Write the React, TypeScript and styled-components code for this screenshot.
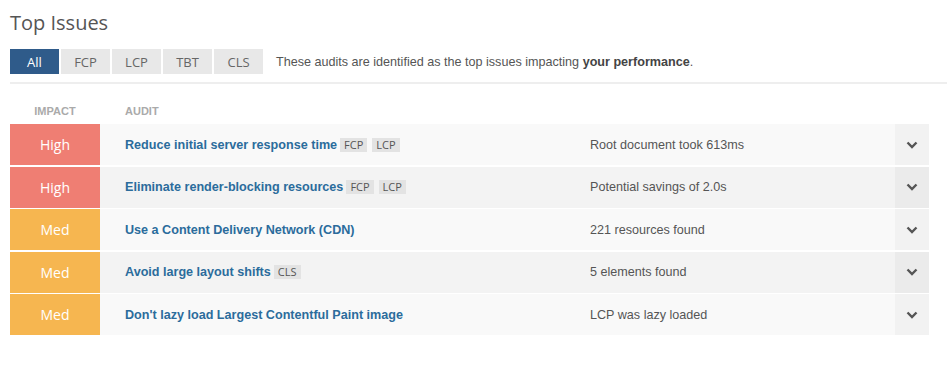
import React, { useState } from "react";
import styled, { createGlobalStyle } from "styled-components";

type Impact = "High" | "Med";

interface Issue {
  impact: Impact;
  title: string;
  tags: string[];
  detail: string;
}

const issues: Issue[] = [
  { impact: "High", title: "Reduce initial server response time", tags: ["FCP", "LCP"], detail: "Root document took 613ms" },
  { impact: "High", title: "Eliminate render-blocking resources", tags: ["FCP", "LCP"], detail: "Potential savings of 2.0s" },
  { impact: "Med", title: "Use a Content Delivery Network (CDN)", tags: [], detail: "221 resources found" },
  { impact: "Med", title: "Avoid large layout shifts", tags: ["CLS"], detail: "5 elements found" },
  { impact: "Med", title: "Don't lazy load Largest Contentful Paint image", tags: [], detail: "LCP was lazy loaded" },
];

const filters = ["All", "FCP", "LCP", "TBT", "CLS"];

export default function App() {
  const [active, setActive] = useState("All");

  return (
    <Page>
      <GlobalStyle />
      <Title>Top Issues</Title>
      <FilterBar>
        <Tabs>
          {filters.map((f) => (
            <Tab key={f} active={f === active} onClick={() => setActive(f)}>
              {f}
            </Tab>
          ))}
        </Tabs>
        <Description>
          These audits are identified as the top issues impacting <b>your performance</b>.
        </Description>
      </FilterBar>
      <Divider />
      <HeaderRow>
        <HeadCell width="90px" center>Impact</HeadCell>
        <HeadCell>Audit</HeadCell>
      </HeaderRow>
      <Rows>
        {issues.map((issue, i) => (
          <Row key={issue.title} shade={i % 2 === 1}>
            <ImpactCell level={issue.impact}>{issue.impact}</ImpactCell>
            <AuditCell>
              <AuditTitle>{issue.title}</AuditTitle>
              <TagList>
                {issue.tags.map((t) => (
                  <Tag key={t}>{t}</Tag>
                ))}
              </TagList>
            </AuditCell>
            <DetailCell>{issue.detail}</DetailCell>
            <ToggleCell shade={i % 2 === 1}>
              <svg width="12" height="8" viewBox="0 0 12 8">
                <path d="M1.5 1.5 L6 6 L10.5 1.5" fill="none" stroke="#555" strokeWidth="2.4" />
              </svg>
            </ToggleCell>
          </Row>
        ))}
      </Rows>
    </Page>
  );
}

const GlobalStyle = createGlobalStyle`
  body {
    margin: 0;
    background: #fff;
    font-family: "Liberation Sans", Arial, sans-serif;
  }
`;

const Page = styled.div`
  padding: 8px 18px 0 10px;
  width: 947px;
  box-sizing: border-box;
`;

const Title = styled.h1`
  margin: 0;
  font-family: "Open Sans", sans-serif;
  font-weight: 400;
  font-size: 20px;
  line-height: 30px;
  color: #555;
`;

const FilterBar = styled.div`
  display: flex;
  align-items: center;
  margin-top: 11px;
`;

const Tabs = styled.div`
  display: flex;
  gap: 2px;
`;

const Tab = styled.button<{ active: boolean }>`
  width: 49px;
  height: 25px;
  border: none;
  padding: 0;
  font-family: "Open Sans", sans-serif;
  font-size: 13px;
  cursor: pointer;
  background: ${(p) => (p.active ? "#2f5b8a" : "#e8e8e8")};
  color: ${(p) => (p.active ? "#fff" : "#666")};
`;

const Description = styled.p`
  margin: 0 0 0 13px;
  font-size: 12.6px;
  color: #555;
  b {
    color: #444;
  }
`;

const Divider = styled.hr`
  border: none;
  border-top: 2px solid #eee;
  margin: 8px -18px 0 0;
`;

const HeaderRow = styled.div`
  display: flex;
  align-items: center;
  height: 40px;
  padding-top: 14px;
  box-sizing: border-box;
`;

const HeadCell = styled.div<{ width?: string; center?: boolean }>`
  width: ${(p) => p.width || "auto"};
  text-align: ${(p) => (p.center ? "center" : "left")};
  padding-left: ${(p) => (p.center ? "0" : "25px")};
  font-size: 11px;
  font-weight: 700;
  text-transform: uppercase;
  color: #aaa;
`;

const Rows = styled.div`
  display: flex;
  flex-direction: column;
  gap: 1.5px;
`;

const Row = styled.div<{ shade: boolean }>`
  display: flex;
  align-items: stretch;
  height: 41px;
  background: ${(p) => (p.shade ? "#f3f3f3" : "#f9f9f9")};
`;

const ImpactCell = styled.div<{ level: Impact }>`
  width: 90px;
  display: flex;
  align-items: center;
  justify-content: center;
  font-family: "Open Sans", sans-serif;
  font-size: 14px;
  color: #fff;
  background: ${(p) => (p.level === "High" ? "#ef7e73" : "#f6b650")};
`;

const AuditCell = styled.div`
  width: 465px;
  padding-left: 25px;
  display: flex;
  align-items: center;
  gap: 3px;
`;

const AuditTitle = styled.span`
  font-size: 12.6px;
  font-weight: 700;
  color: #2b6c9c;
`;

const TagList = styled.span`
  display: flex;
  gap: 5px;
`;

const Tag = styled.span`
  font-family: "Open Sans", sans-serif;
  font-size: 11px;
  line-height: 14px;
  padding: 0 4px;
  background: #e3e3e3;
  color: #555;
`;

const DetailCell = styled.div`
  flex: 1;
  display: flex;
  align-items: center;
  font-size: 12.6px;
  color: #555;
`;

const ToggleCell = styled.div<{ shade: boolean }>`
  width: 34px;
  display: flex;
  align-items: center;
  justify-content: center;
  background: ${(p) => (p.shade ? "#ebebeb" : "#f2f2f2")};
`;
